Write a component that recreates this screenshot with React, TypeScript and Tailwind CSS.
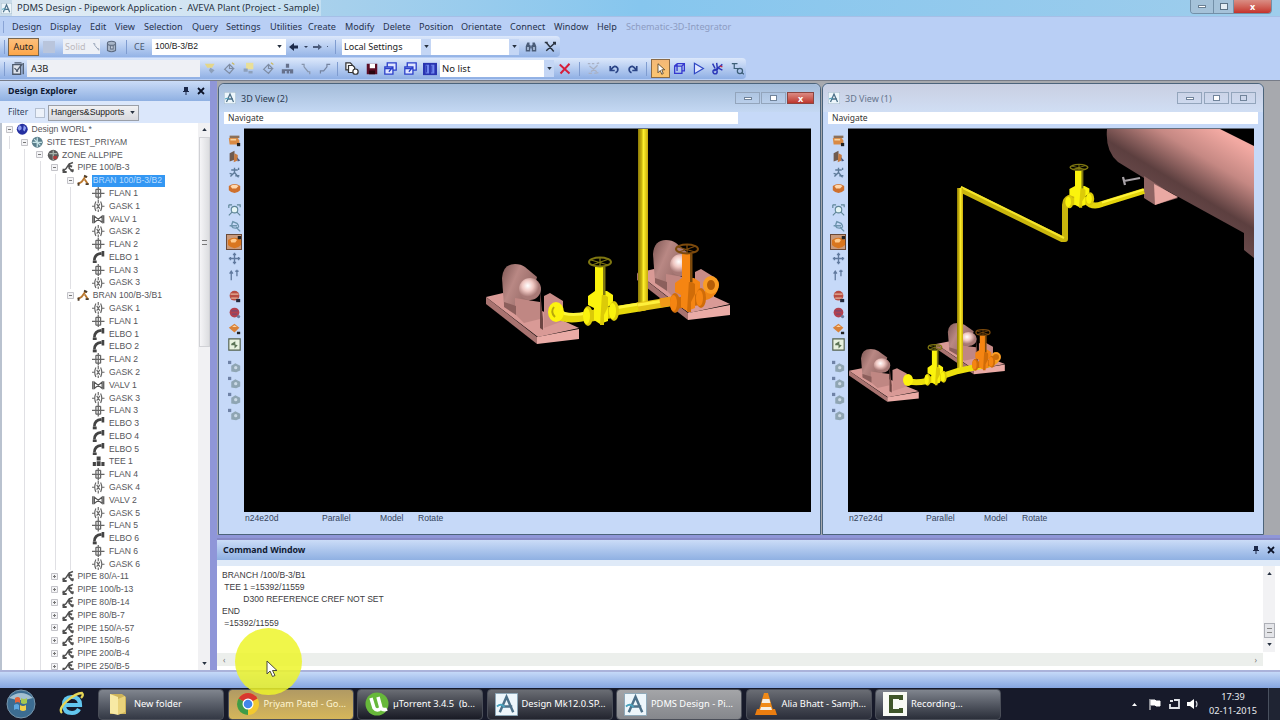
import React from "react";

type IconProps = { name: string; size?: number };

// Small 16x16 glyphs shared by the toolbars, the tree and the view side bars
const glyphs: Record<string, React.ReactNode> = {
  gask: (
    <g stroke="#666" fill="none" strokeWidth="1.5">
      <path d="M0 8h3M13 8h3M5 2Q2 8 5 14M11 2Q14 8 11 14M6 5l4 6M10 5l-4 6M8 0v4M8 12v4" />
    </g>
  ),
  flan: (
    <g stroke="#666" fill="none" strokeWidth="1.6">
      <path d="M0 8h16M8 0v16M5 3v10M11 3v10" />
      <path d="M5 3h6M5 13h6" />
    </g>
  ),
  valv: (
    <g stroke="#555" fill="none" strokeWidth="1.6">
      <path d="M1 3v10M15 3v10M3 4l10 8V4L3 12z" />
    </g>
  ),
  elbo: (
    <g stroke="#444" fill="none" strokeWidth="3.4">
      <path d="M3 12Q3 4 12 3M14 0v7" />
      <path d="M1 14h5" strokeWidth="3.6" />
    </g>
  ),
  tee: (
    <g fill="#444">
      <path d="M6 2h5v5H6zM1 9h4v5H1zM6 8h5v6H6zM12 9h4v5h-4z" />
    </g>
  ),
  pipe: (
    <g stroke="#505050" fill="none" strokeWidth="2">
      <path d="M1 13l4-3 4-6 5-2M10 3l-1 6 5 5" />
      <path d="M2 10v4h4M8 6l5 1M11 12h4" strokeWidth="2.6" />
    </g>
  ),
  bran: (
    <g fill="none" strokeWidth="2.4">
      <path d="M1 13l5-3 5-7M10 7l4 6" stroke="#b9772e" />
      <path d="M9 2l4 2M11 13h4M2 11v4" stroke="#4d3d2c" />
    </g>
  ),
  world: (
    <g>
      <circle cx="8" cy="8" r="7" fill="#2530a0" />
      <path d="M4 3q4 1 3 5l-3 2-2-3zM10 3l3 3-2 5-2-2z" fill="#8f9ff0" />
    </g>
  ),
  site: (
    <g>
      <circle cx="8" cy="8" r="7" fill="#5b7f8c" />
      <path d="M8 2v12M2 8h12M4 4l8 8" stroke="#c6e3e6" strokeWidth="1.6" />
    </g>
  ),
  zone: (
    <g>
      <circle cx="8" cy="8" r="7" fill="#5b5b5b" />
      <path d="M3 6h10M8 2v12" stroke="#a8b4ac" strokeWidth="1.6" />
      <path d="M8 9h5v4H8z" fill="#b03a3a" />
    </g>
  ),
  stack: (
    <g fill="#fff" stroke="#333" strokeWidth="1.4">
      <path d="M1 1h5l2 2v6H1z" />
      <path d="M4 4h5l2 2v6H4z" />
      <circle cx="12" cy="11" r="3" />
    </g>
  ),
  save: (
    <g>
      <path d="M1 1h14v14H1z" fill="#5c0e26" />
      <path d="M5 1h7v6H5z" fill="#fff" />
      <path d="M4 10h8v5H4z" fill="#2a0510" />
    </g>
  ),
  window: (
    <g fill="#dfe5ff" stroke="#2a3fc9" strokeWidth="1.6">
      <path d="M4 1h11v9H4z" />
      <path d="M1 6h10v9H1zM1 8h10M6 12l5-6" />
    </g>
  ),
  book: (
    <g>
      <path d="M0 1h16v14H0z" fill="#2834b0" />
      <path d="M3 3h4v10H3zM9 3h4v10H9z" fill="#6f86ee" />
      <path d="M4 4v8M10 4v8" stroke="#2834b0" />
    </g>
  ),
  redx: <path d="M1 2l13 12M14 1L2 14" stroke="#d61f3b" strokeWidth="2.6" fill="none" />,
  tools: (
    <g stroke="#2b3440" strokeWidth="2" fill="none">
      <path d="M1 2h4M3 2l10 12M14 3L3 13M12 2h3v3" />
    </g>
  ),
  binoc: (
    <g fill="#4a5c78">
      <path d="M3 2h3v3l1 1v8H1V7zM10 2h3l2 5v7H9V6l1-1z" />
      <path d="M7 6h2v4H7z" />
      <path d="M3 8h2v4H3zM11 8h2v4h-2z" fill="#b9cbe8" />
    </g>
  ),
  undo: <path d="M3 4v6h6M4 9Q9 1 13 7q1 4-3 6" stroke="#2a4486" strokeWidth="2.2" fill="none" />,
  redo: <path d="M13 4v6H7M12 9Q7 1 3 7q-1 4 3 6" stroke="#2a4486" strokeWidth="2.2" fill="none" />,
  faded: (
    <g stroke="#a9b1c4" strokeWidth="1.5" fill="none">
      <path d="M1 2h3M6 2h3M12 2l3-1M2 14h4M9 14l5-1M3 5l9 7M13 4l-8 8" />
    </g>
  ),
  pointer: <path d="M4 1v12l3-3 2 5 2-1-2-5h4z" fill="#fff" stroke="#4d3a22" strokeWidth="1.1" />,
  cube: (
    <g fill="none" stroke="#3538cf" strokeWidth="1.6">
      <path d="M2 5h9v9H2zM5 2h9v9h-3M2 5l3-3M11 5l3-3M5 2v9" />
    </g>
  ),
  play: <path d="M3 1.500l11 6.500-11 6.500z" fill="#dfe6ff" stroke="#2f48c4" strokeWidth="1.5" />,
  cut: (
    <g fill="none" stroke="#2a36b8" strokeWidth="1.8">
      <path d="M2 2l3 6M7 1l1 9M14 3L4 11M8 7l6 3" />
      <circle cx="5" cy="12" r="2.600" />
      <path d="M11 5l3 1" stroke="#c03050" />
    </g>
  ),
  link: (
    <g fill="none" stroke="#3d5f78" strokeWidth="1.5">
      <path d="M1 2h7M4 2v6h6" />
      <circle cx="11" cy="11" r="3.200" />
      <path d="M13 13l3 2" />
    </g>
  ),
  edit: (
    <g fill="#dfe4ec" stroke="#4d596c" strokeWidth="1.5">
      <path d="M2 3h9v11H2zM4 7l4 4M4 1h8M14 1v13" />
      <path d="M13 2L6 11" />
    </g>
  ),
  cylinder: (
    <g fill="#a9b6c8" stroke="#5d6b80" strokeWidth="1.3">
      <path d="M3 4v9q5 3 10 0V4" />
      <ellipse cx="8" cy="4" rx="5" ry="2.500" />
      <path d="M7 7h3v4H7z" fill="#dfe7f2" />
    </g>
  ),
  star: (
    <g>
      <path d="M1 2h12l-3 5H4z" fill="#e4d68a" />
      <path d="M8 7l5 3-4 4-3-4z" fill="#8da0bb" />
    </g>
  ),
  diamond: (
    <g fill="none" stroke="#7e8ca3" strokeWidth="1.500">
      <path d="M2 9l6-6 5 5-5 6zM8 3v5h6" />
      <path d="M11 1l3 2" stroke="#ccb95c" />
    </g>
  ),
  yellowDoc: (
    <g>
      <path d="M5 1h9v8H5z" fill="#e9df98" />
      <path d="M2 8h5v4H2zM8 11h5v3H8z" fill="#8da0bb" />
    </g>
  ),
  nodes: (
    <g fill="#66718c">
      <path d="M6 2h4v5H6zM1 9h14v2H1zM1 11h4v3H1zM7 11h3v3H7zM11 11h4v3h-4z" />
    </g>
  ),
  corner: <path d="M2 3h3v3M9 12h3v3M5 6l5 6" fill="none" stroke="#8795ac" strokeWidth="1.500" />,
  slash: <path d="M3 14v-3h4l4-5V3h4" fill="none" stroke="#7584a0" strokeWidth="1.500" />,
  // side bar
  box: (
    <g>
      <path d="M2 2h12v3H2z" fill="#8b705a" />
      <path d="M1 5h11l2 3v5H2z" fill="#d98a45" />
      <path d="M3 6h7v2H3z" fill="#f6d29e" />
      <path d="M11 11h4v4h-4z" fill="#222" />
    </g>
  ),
  boxMan: (
    <g>
      <path d="M2 4l6-3v11l-6 2z" fill="#6f5b50" />
      <path d="M8 4l4 2v7l-5 2z" fill="#c87b40" />
      <path d="M11 9l4 4-3 1z" fill="#4b5a80" />
    </g>
  ),
  walk: (
    <g fill="none" stroke="#5d7a99" strokeWidth="1.700">
      <path d="M8 2v6l-5 5M8 8l5 6M4 5h8M2 9l3 1" />
      <path d="M9 12h5M13 2v3" />
    </g>
  ),
  ball: (
    <g>
      <path d="M1 5q7-5 14 0v5q-7 7-14 0z" fill="#cf702d" />
      <path d="M3 5q5-3 10 0l-3 3H5z" fill="#ffd8ae" />
    </g>
  ),
  bigBall: (
    <g>
      <path d="M0 5q8-6 16 0v6q-8 8-16 0z" fill="#d9761f" />
      <path d="M3 5q5-3 8 0l-2 3H4z" fill="#ffc98a" />
      <path d="M12 0h4v4h-4z" fill="#222" />
    </g>
  ),
  zoomBox: (
    <g fill="none" stroke="#5e8596" strokeWidth="1.400">
      <circle cx="8" cy="7" r="4" fill="#e6f5f5" />
      <path d="M1 1h4M11 1h4v3M1 14l4-4M11 10l4 4M1 1v4" />
    </g>
  ),
  magnify: (
    <g fill="none" stroke="#6c93ad" strokeWidth="1.700">
      <path d="M6 2q-4 8 3 8t2-6zM10 9l5 5M2 7h9" />
    </g>
  ),
  move: <path d="M8 1v14M1 8h14M6 3h4M6 13h4M3 6v4M13 6v4" fill="none" stroke="#60799e" strokeWidth="1.700" />,
  updown: <path d="M4 5v10M2 7l2-3 2 3M11 2v8M9 4h4" fill="none" stroke="#60799e" strokeWidth="1.600" />,
  redball: (
    <g>
      <circle cx="8" cy="7" r="6" fill="#b84d43" />
      <path d="M3 5h10M4 10h8" stroke="#e6b49b" strokeWidth="1.500" />
      <path d="M10 11h5v4h-5z" fill="#252a3d" />
    </g>
  ),
  redring: (
    <g>
      <circle cx="8" cy="8" r="6" fill="#b3414f" />
      <path d="M4 6h8M5 10h6" stroke="#7a4870" strokeWidth="1.500" />
      <circle cx="13" cy="13" r="2" fill="#6b7c9e" />
    </g>
  ),
  orange: (
    <g>
      <path d="M1 7l7-5 6 5-6 6z" fill="#d98239" />
      <path d="M5 6l3-2 3 2z" fill="#ffd49f" />
      <path d="M11 12h4v3h-4z" fill="#222" />
    </g>
  ),
  page: (
    <g>
      <path d="M1 1h14v14H1z" fill="#e8f2e0" stroke="#52604e" strokeWidth="1.400" />
      <path d="M4 7l5-3v4l3 1-4 4V9H4z" fill="#5b7455" />
    </g>
  ),
  gear: (
    <g>
      <path d="M0 1h4v4H0z" fill="#6f82a6" />
      <path d="M4 7l5-3 6 3v6l-5 2-6-1z" fill="#8fa5b3" />
      <circle cx="9.500" cy="9.500" r="2" fill="#ccdae6" />
    </g>
  ),
};

function Icon({ name, size = 12 }: IconProps) {
  return (
    <svg width={size} height={size} viewBox="0 0 16 16" className="shrink-0">
      {glyphs[name]}
    </svg>
  );
}

function Cell({ name, w, size = 13 }: { name: string; w: string; size?: number }) {
  return (
    <div className={`flex shrink-0 items-center justify-center ${w}`}>
      <Icon name={name} size={size} />
    </div>
  );
}

function AvevaLogo({ size }: { size: number }) {
  return (
    <svg width={size} height={size} viewBox="0 0 24 24" className="shrink-0">
      <path d="M.5.500h23v23H.500z" fill="#edf6fb" stroke="#8ba7b8" />
      <path d="M5 20l7-16 7 16M8 14h10" fill="none" stroke="#4c7088" strokeWidth="2.600" />
      <path d="M2 14q5-4 8 1" fill="none" stroke="#49a2bd" strokeWidth="2" />
    </svg>
  );
}

const Sep = ({ w }: { w: string }) => (
  <div className={`flex shrink-0 justify-center ${w}`}>
    <div className="h-[14px] w-px bg-[#7f9cd0]" />
  </div>
);

const Arrow = ({ up }: { up?: boolean }) => (
  <svg width="5" height="3" viewBox="0 0 6 4" className="shrink-0">
    <path d={up ? "M0 4h6L3 0z" : "M0 0h6L3 4z"} fill="#26303f" />
  </svg>
);

const menu: [string, string][] = [
  ["Design", "w-[38px]"],
  ["Display", "w-[40px]"],
  ["Edit", "w-[25px]"],
  ["View", "w-[29px]"],
  ["Selection", "w-[48px]"],
  ["Query", "w-[34px]"],
  ["Settings", "w-[44px]"],
  ["Utilities", "w-[38px]"],
  ["Create", "w-[37px]"],
  ["Modify", "w-[38px]"],
  ["Delete", "w-[36px]"],
  ["Position", "w-[42px]"],
  ["Orientate", "w-[49px]"],
  ["Connect", "w-[44px]"],
  ["Window", "w-[43px]"],
  ["Help", "w-[29px]"],
];

function TitleBar() {
  return (
    <div className="flex h-4 items-center bg-linear-to-r from-[#c9dbe9] via-[#86c6ee] to-[#9ecdec] pl-px">
      <AvevaLogo size={11} />
      <div className="flex h-full w-[309px] items-center bg-linear-to-r from-white/50 to-white/30 pl-[5px] text-[9.4px] whitespace-pre text-[#27323f]">
        PDMS Design - Pipework Application -  AVEVA Plant (Project - Sample)
      </div>
      <div className="mr-2 ml-auto flex h-[14px] self-start overflow-hidden rounded-b border border-t-0 border-[#7390a8] text-white">
        <div className="flex w-[22px] items-center justify-center bg-[#a5c2d9]">
          <div className="h-[3px] w-2 border border-[#6a7f92] bg-white" />
        </div>
        <div className="flex w-[21px] items-center justify-center border-x border-[#7390a8] bg-[#a5c2d9]">
          <div className="h-[7px] w-2 border border-[#5b7083] bg-white/70" />
        </div>
        <div className="flex w-[37px] items-center justify-center bg-linear-to-b from-[#d98d84] to-[#c4302b] text-[9px] font-bold">
          x
        </div>
      </div>
    </div>
  );
}

function MenuBar() {
  return (
    <div className="flex h-5 items-center border-t border-[#a5bfe6] text-[9.100px] text-[#26324e]">
      <div className="ml-[3px] h-3 w-px bg-[#8aa4d6]" />
      <div className="ml-2 flex">
        {menu.map(([label, w]) => (
          <div key={label} className={w}>
            {label}
          </div>
        ))}
        <div className="text-[#8d9cc2]">Schematic-3D-Integrator</div>
      </div>
    </div>
  );
}

function MainToolbar() {
  return (
    <div className="flex h-[21px] w-[560px] items-center rounded-r bg-linear-to-b from-[#dce8fb] to-[#94b3e6] text-[9px] text-[#222]">
      <Sep w="w-2" />
      <div className="flex h-[18px] w-[31px] items-center justify-center border border-[#77664f] bg-linear-to-b from-[#fcc07c] to-[#fda648]">
        Auto
      </div>
      <div className="mx-1 h-3 w-3 bg-[#b9c5dc]" />
      <div className="ml-1 flex h-[15px] w-[37px] items-center bg-[#edf0f6] pl-[2px] text-[#bcb9bd]">
        Solid
      </div>
      <div className="-ml-2">
        <Icon name="corner" size={9} />
      </div>
      <Cell name="cylinder" w="w-[20px]" />
      <Sep w="w-[10px]" />
      <div className="w-[21px] pl-[3px] text-[#4b5870]">CE</div>
      <div className="flex h-[16px] w-[134px] items-center justify-between bg-white pr-1 pl-[3px] font-['Liberation_Sans',sans-serif] text-[8.600px]">
        100/B-3/B2 <Arrow />
      </div>
      <svg width="42" height="12" viewBox="0 0 42 12" className="shrink-0">
        <path d="M3 6l5-4v2.500h4v3H8V10z" fill="#1c2a4a" />
        <path d="M18 5h4l-2 2z" fill="#33415c" />
        <path d="M36 6l-4-3v2h-5v2h5v2z" fill="#4c5c7b" />
        <path d="M41 5h1v1h-1z" fill="#4c5c7b" />
      </svg>
      <Sep w="w-[14px]" />
      <div className="flex h-[16px] w-[89px] shrink-0 items-center justify-between bg-white pl-[2px]">
        Local Settings
        <div className="flex h-full w-[10px] items-center justify-center bg-[#c4d6f5]">
          <Arrow />
        </div>
      </div>
      <div className="flex h-[16px] w-[88px] shrink-0 justify-end bg-white">
        <div className="flex h-full w-[10px] items-center justify-center bg-[#c4d6f5]">
          <Arrow />
        </div>
      </div>
      <Cell name="binoc" w="w-[24px]" size={12} />
      <Cell name="tools" w="w-[13px]" size={12} />
    </div>
  );
}

function ElementToolbar() {
  return (
    <div className="mt-px flex h-[21px] w-[746px] items-center rounded-r bg-linear-to-b from-[#dce8fb] to-[#8fafe4] text-[9px] text-[#222]">
      <Sep w="w-2" />
      <Cell name="edit" w="w-[19px]" size={14} />
      <div className="flex h-[17px] w-[173px] shrink-0 items-center bg-[#eef0f5] pl-1 text-[9.400px]">A3B</div>
      <Cell name="star" w="w-[20px]" />
      <Cell name="diamond" w="w-[19px]" />
      <Cell name="yellowDoc" w="w-[19px]" />
      <Cell name="diamond" w="w-[20px]" />
      <Cell name="nodes" w="w-[19px]" />
      <Cell name="corner" w="w-[18px]" />
      <Cell name="slash" w="w-[18px]" />
      <Sep w="w-[9px]" />
      <Cell name="stack" w="w-[20px]" size={14} />
      <Cell name="save" w="w-[19px]" size={12} />
      <Cell name="window" w="w-[19px]" size={13} />
      <Cell name="window" w="w-[20px]" size={13} />
      <Cell name="book" w="w-[20px]" size={14} />
      <div className="flex h-[17px] w-[114px] shrink-0 items-center justify-between bg-white pl-[2px] text-[9.500px]">
        No list
        <div className="flex h-full w-[10px] items-center justify-center bg-[#c4d6f5]">
          <Arrow />
        </div>
      </div>
      <Cell name="redx" w="w-[22px]" size={12} />
      <Sep w="w-[6px]" />
      <Cell name="faded" w="w-[22px]" />
      <Cell name="undo" w="w-[19px]" size={12} />
      <Cell name="redo" w="w-[19px]" size={12} />
      <Sep w="w-[9px]" />
      <div className="flex h-[19px] w-[19px] shrink-0 items-center justify-center border border-[#8a6a45] bg-linear-to-b from-[#f3b877] to-[#fbc56f]">
        <Icon name="pointer" />
      </div>
      <Cell name="cube" w="w-[19px]" />
      <Cell name="play" w="w-[19px]" />
      <Cell name="cut" w="w-[19px]" />
      <Cell name="link" w="w-[20px]" />
    </div>
  );
}

function PanelTitle({ title }: { title: string }) {
  return (
    <div className="flex h-5 shrink-0 items-center pr-1 text-[8.800px] font-bold text-[#101a33]">
      <span className="flex-1">{title}</span>
      <svg width="24" height="10" viewBox="0 0 24 10">
        <path d="M2 1h4v4H2zM1 5h6v1H1zM3.500 6h1v3h-1z" fill="#1b2748" />
        <path d="M16 2l6 6M22 2l-6 6" stroke="#0b1227" strokeWidth="1.800" />
      </svg>
    </div>
  );
}

type Row = [depth: number, icon: string, label: string];

const rows: Row[] = [
  [0, "world", "Design WORL *"],
  [1, "site", "SITE TEST_PRIYAM"],
  [2, "zone", "ZONE ALLPIPE"],
  [3, "pipe", "PIPE 100/B-3"],
  [4, "bran", "BRAN 100/B-3/B2"],
  [5, "flan", "FLAN 1"],
  [5, "gask", "GASK 1"],
  [5, "valv", "VALV 1"],
  [5, "gask", "GASK 2"],
  [5, "flan", "FLAN 2"],
  [5, "elbo", "ELBO 1"],
  [5, "flan", "FLAN 3"],
  [5, "gask", "GASK 3"],
  [4, "bran", "BRAN 100/B-3/B1"],
  [5, "gask", "GASK 1"],
  [5, "flan", "FLAN 1"],
  [5, "elbo", "ELBO 1"],
  [5, "elbo", "ELBO 2"],
  [5, "flan", "FLAN 2"],
  [5, "gask", "GASK 2"],
  [5, "valv", "VALV 1"],
  [5, "gask", "GASK 3"],
  [5, "flan", "FLAN 3"],
  [5, "elbo", "ELBO 3"],
  [5, "elbo", "ELBO 4"],
  [5, "elbo", "ELBO 5"],
  [5, "tee", "TEE 1"],
  [5, "flan", "FLAN 4"],
  [5, "gask", "GASK 4"],
  [5, "valv", "VALV 2"],
  [5, "gask", "GASK 5"],
  [5, "flan", "FLAN 5"],
  [5, "elbo", "ELBO 6"],
  [5, "flan", "FLAN 6"],
  [5, "gask", "GASK 6"],
  [3, "pipe", "PIPE 80/A-11"],
  [3, "pipe", "PIPE 100/b-13"],
  [3, "pipe", "PIPE 80/B-14"],
  [3, "pipe", "PIPE 80/B-7"],
  [3, "pipe", "PIPE 150/A-57"],
  [3, "pipe", "PIPE 150/B-6"],
  [3, "pipe", "PIPE 200/B-4"],
  [3, "pipe", "PIPE 250/B-5"],
];

function TreeRow({ row, index }: { row: Row; index: number }) {
  const [depth, icon, label] = row;
  const selected = index === 4;
  const collapsed = index > 34;
  return (
    <div className="flex h-[12.79px] items-center">
      {Array.from({ length: depth }, (_, i) => (
        <div key={i} className="flex h-full w-[15.3px] shrink-0 justify-center">
          {(i > 0 || depth === 1) && <div className="h-full w-px bg-[#e0e0e4]" />}
        </div>
      ))}
      {depth < 5 ? (
        <div className="flex w-[14px] shrink-0 justify-center">
          <svg width="7" height="7" viewBox="0 0 7 7">
            <path d="M.5.500h6v6h-6z" fill="#f4f4f6" stroke="#c3c3c8" />
            <path d={collapsed ? "M2 3.500h3M3.500 2v3" : "M2 3.500h3"} stroke="#777" />
          </svg>
        </div>
      ) : (
        <div className="w-[14px] shrink-0" />
      )}
      <Icon name={icon} size={12.500} />
      <div
        className={
          selected
            ? "ml-[2px] flex h-3 w-[73px] items-center bg-[#3397f3] pl-px text-[#b9dcff]"
            : depth === 5
              ? "ml-[4px] text-[#55555a]"
              : "ml-[3px] text-[#55555a]"
        }
      >
        {label}
      </div>
    </div>
  );
}

function Explorer() {
  return (
    <div className="flex w-[210px] shrink-0 flex-col bg-[#dbe7fb]">
      <div className="bg-linear-to-b from-[#cbdcf7] to-[#8fb0e2] pl-2">
        <PanelTitle title="Design Explorer" />
      </div>
      <div className="flex h-[22px] items-center pt-px pl-2 text-[9px] text-[#30405e]">
        <div className="w-[27px] text-[8.500px]">Filter</div>
        <div className="h-[10px] w-[10px] border border-[#b5c0d1] bg-[#edf2fa]" />
        <div className="ml-[3px] flex h-4 w-[91px] items-center justify-between border border-[#9a9fa8] bg-linear-to-b from-[#f1f1f3] to-[#d8d9de] pr-[3px] pl-[2px] font-['Liberation_Sans',sans-serif] text-[8.700px] text-[#222]">
          Hangers&amp;Supports <Arrow />
        </div>
      </div>
      <div className="flex min-h-0 flex-1 border-l-2 border-[#b9c2cf] bg-white">
        <div className="flex-1 overflow-hidden font-['Liberation_Sans',sans-serif] text-[8.600px] leading-none whitespace-nowrap">
          {rows.map((row, i) => (
            <TreeRow key={i} row={row} index={i} />
          ))}
        </div>
        <div className="flex w-[12px] flex-col items-center bg-[#f1f1f3] py-[5px]">
          <Arrow up />
          <div className="mt-[6px] flex h-[210px] w-[11px] items-center justify-center border border-[#d0d1d5] bg-linear-to-r from-[#f5f5f7] to-[#dcdde0]">
            <div className="h-[5px] w-[5px] border-y border-[#777]" />
          </div>
          <div className="mt-auto">
            <Arrow />
          </div>
        </div>
      </div>
    </div>
  );
}

const sideGroups = [
  ["box", "boxMan", "walk", "ball"],
  ["zoomBox", "magnify", "bigBall", "move", "updown"],
  ["redball", "redring", "orange", "page"],
  ["gear", "gear", "gear", "gear"],
];

function SideBar() {
  return (
    <div className="flex w-[20px] shrink-0 flex-col items-center gap-[6px] pt-[4px]">
      {sideGroups.map((group, g) => (
        <div key={g} className="flex flex-col">
          {group.map((name, i) => (
            <div
              key={i}
              className={`flex h-4 w-4 items-center justify-center ${name === "bigBall" ? "border border-[#6b4a38] bg-[#c99a7c]" : ""}`}
            >
              <Icon name={name} size={13} />
            </div>
          ))}
        </div>
      ))}
    </div>
  );
}

// Motor and pump on a sloping base plate, origin at the left corner of the plate
function Pump({ transform }: { transform: string }) {
  return (
    <g transform={transform}>
      <path d="M0 33L17 29 93 64 52 73z" fill="#d99a96" />
      <path d="M0 33v7l51 40V73z" fill="#a87370" />
      <path d="M51 73l42-8v10l-42 5z" fill="#eaaba6" />
      <path d="M16 14Q17 0 29 0q6 0 10 3l12 10-6 22-15 14-12-7z" fill="url(#motor)" />
      <path d="M29 34l12 2 13 2v17l-16 4-9-9z" fill="#c08783" />
      <path d="M18 38l12 4v9l-12-8z" fill="#8c5f5c" />
      <path d="M54 26l3 29v11l-3-2z" fill="#6e4542" />
      <path d="M58 32l6-3 13 8v20l-19 7z" fill="#c98c88" />
      <circle cx="44" cy="25" r="11" fill="url(#cap)" />
    </g>
  );
}

type ValveProps = { transform: string; light: string; mid: string; dark: string };

// Gate valve with hand wheel, origin at the centre of the pipe
function Valve({ transform, light, mid, dark }: ValveProps) {
  return (
    <g transform={transform}>
      <path d="M-15 4L15-1" stroke={mid} strokeWidth="11" />
      <path d="M-5-22l-7 5v9l6 3v12l6 4 8-3V-6l5-4v-8l-6-4z" fill={light} />
      <path d="M2-20l6 4v10L4 2v10H0z" fill={mid} />
      <path d="M-5-46H5v28H-5z" fill={light} />
      <path d="M3-46h2.500v28H3z" fill={dark} />
      <ellipse cy="-51" rx="11" ry="4.500" fill="none" stroke={dark} strokeWidth="2" />
      <path d="M-9-53L8-48M-8-48L9-54M0-55v8" stroke={dark} strokeWidth="1.300" />
      <ellipse cx="-12" cy="3" rx="5" ry="10" fill={mid} />
      <ellipse cx="-13.500" cy="3" rx="3.500" ry="8" fill={light} />
      <ellipse cx="14" cy="-2" rx="5" ry="10" fill={mid} />
      <ellipse cx="12.500" cy="-2" rx="3.500" ry="8" fill={light} />
    </g>
  );
}

const yellow = { light: "#fbf30d", mid: "#dccb08", dark: "#7f7711" };
const orange = { light: "#f58512", mid: "#d06c08", dark: "#7d4a0c" };

const Shades = () => (
  <defs>
    <linearGradient id="motor" x1="0" x2="1" y1="0" y2=".6">
      <stop offset="0" stopColor="#7d5653" />
      <stop offset=".4" stopColor="#b98884" />
      <stop offset="1" stopColor="#8d625f" />
    </linearGradient>
    <radialGradient id="cap" cx=".4" cy=".35">
      <stop offset="0" stopColor="#fff" />
      <stop offset=".5" stopColor="#f0c8c3" />
      <stop offset="1" stopColor="#a87976" />
    </radialGradient>
    <linearGradient id="riser">
      <stop offset="0" stopColor="#8c7a08" />
      <stop offset=".35" stopColor="#c9b30c" />
      <stop offset=".55" stopColor="#fdf02c" />
      <stop offset="1" stopColor="#c7a90b" />
    </linearGradient>
    <linearGradient id="tank" gradientUnits="userSpaceOnUse" x1="1232" y1="138" x2="1186" y2="214">
      <stop offset="0" stopColor="#f2a9a2" />
      <stop offset=".35" stopColor="#c58883" />
      <stop offset=".75" stopColor="#5c3f3f" />
      <stop offset="1" stopColor="#68494a" />
    </linearGradient>
  </defs>
);

function CloseScene() {
  return (
    <svg viewBox="244 129 567 383" className="block h-full w-full">
      <Shades />
      <Pump transform="translate(486 264)" />
      <Pump transform="translate(637 240)" />
      <path d="M556 313Q566 322 590 315L645 306" fill="none" stroke="#e6d80b" strokeWidth="9" />
      <path d="M558 310Q568 318 590 312L645 303" fill="none" stroke="#fdf63a" strokeWidth="3" />
      <ellipse cx="556" cy="312" rx="8" ry="10" fill="#fdf30e" />
      <path d="M554 307q-4 5 1 10" fill="none" stroke="#b7a80b" strokeWidth="2" />
      <path d="M638 129h10v175h-10z" fill="url(#riser)" />
      <path d="M638 307L675 301" stroke="#e3c315" strokeWidth="9" />
      <path d="M638 305L675 299" stroke="#fff03c" strokeWidth="3" />
      <path d="M660 303L678 300" stroke="#ef9918" strokeWidth="9" />
      <path d="M695 297q20 0 19-14" fill="none" stroke="#ef8512" strokeWidth="9" />
      <ellipse cx="711" cy="285" rx="6" ry="7" fill="#b65e07" stroke="#fb9d22" strokeWidth="4" />
      <Valve transform="translate(600 313)" {...yellow} />
      <Valve transform="translate(687 300)" {...orange} />
    </svg>
  );
}

function WideScene() {
  return (
    <svg viewBox="848 129 406 383" className="block h-full w-full">
      <path d="M1107 129Q1105 151 1118 162L1144 178 1244 233v17l10 8V146L1220 129z" fill="url(#tank)" />
      <path d="M1144 176l34 22-23 7-11-7z" fill="#8e6462" />
      <path d="M1154 184l24 13-23 8z" fill="#eaa9a3" />
      <path d="M1124 181l16-3M1123 177l2 8" stroke="#a9a3a8" strokeWidth="2.200" />
      <Pump transform="translate(849 349) scale(.75 .66)" />
      <Pump transform="translate(936 323) scale(.74 .64)" />
      <path d="M1144 191L1102 204Q1092 208 1086 201" fill="none" stroke="#e4d40c" strokeWidth="6" />
      <path d="M1144 189.500L1102 202.500" stroke="#fff33a" strokeWidth="2" />
      <path d="M1079 199q-13-5-14 6V239L1062 239 960 189" fill="none" stroke="#c9b50c" strokeWidth="6" strokeLinejoin="round" />
      <path d="M1064 238L961 187" stroke="#f5e52a" strokeWidth="2" />
      <path d="M957 188h6v182h-6z" fill="url(#riser)" />
      <path d="M905 380q8 4 22 1L958 371 990 364" fill="none" stroke="#ece00d" strokeWidth="6" />
      <ellipse cx="908" cy="380" rx="5" ry="6" fill="#fdf30e" />
      <path d="M983 364q14 0 14-8" fill="none" stroke="#f0a01c" strokeWidth="6" />
      <circle cx="996" cy="357" r="4" fill="#c96d0a" stroke="#fb9d22" strokeWidth="2" />
      <Valve transform="translate(935 378) scale(.62 .6)" {...yellow} />
      <Valve transform="translate(983 363) scale(.64 .6)" {...orange} />
      <Valve transform="translate(1079 200) scale(.8 .64)" {...yellow} />
    </svg>
  );
}

type ViewProps = {
  title: string;
  active?: boolean;
  width: string;
  angle: string;
  field: string;
  children: React.ReactNode;
};

function ViewWindow({ title, active, width, angle, field, children }: ViewProps) {
  const button = "flex h-3 items-center justify-center border border-[#93a5bc]";
  return (
    <div
      className={`flex shrink-0 flex-col rounded-t-md border border-[#4c647b] bg-[#c6d9f8] px-[5px] ${width}`}
    >
      <div
        className={`-mx-[5px] flex h-[28px] shrink-0 items-center rounded-t-md pr-[6px] pl-[5px] ${active ? "bg-linear-to-b from-[#a4bcd9] to-[#c4d8f3]" : "bg-linear-to-b from-[#c9cfe2] to-[#d0def4]"}`}
      >
        <AvevaLogo size={12} />
        <div className={`ml-[5px] flex-1 text-[9px] ${active ? "text-[#2b3a50]" : "text-[#67768e]"}`}>{title}</div>
        <div className={`flex ${active ? "gap-px" : "mr-[1px] gap-[2px]"}`}>
          <div className={`${button} w-[25px]`}>
            <div className="h-[3px] w-2 border border-[#71849b] bg-white" />
          </div>
          <div className={`${button} w-[25px]`}>
            <div className="h-[6px] w-[7px] border border-[#71849b] bg-white" />
          </div>
          {active ? (
            <div className="flex h-3 w-[27px] items-center justify-center border border-[#8b4540] bg-linear-to-b from-[#db8a83] to-[#bd342d] text-[9px] leading-none font-bold text-white">
              x
            </div>
          ) : (
            <div className={`${button} w-[25px]`}>
              <div className="h-[6px] w-[7px] border border-[#71849b]" />
            </div>
          )}
        </div>
      </div>
      <div className={`flex h-3 shrink-0 items-center bg-white pl-[4px] text-[8.500px] text-[#333] ${field}`}>Navigate</div>
      <div className="mt-1 flex h-[384px] shrink-0">
        <SideBar />
        <div className={`flex-1 border-t border-[#67707e] bg-black ${active ? "mr-[4px]" : "mr-[4px]"}`}>{children}</div>
      </div>
      <div className="flex pl-[21px] font-['Liberation_Sans',sans-serif] text-[8.600px] leading-[13px] text-[#34435a]">
        <div className="w-[77px]">{angle}</div>
        <div className="w-[58px]">Parallel</div>
        <div className="w-[38px]">Model</div>
        <div>Rotate</div>
      </div>
    </div>
  );
}

function CommandWindow() {
  return (
    <div className="mt-[3px] flex min-h-0 flex-1 flex-col border-t-2 border-[#8689c6] bg-[#dfeaf8]">
      <div className="bg-linear-to-b from-[#cbdcf7] to-[#8fb0e2] pl-[6px]">
        <PanelTitle title="Command Window" />
      </div>
      <div className="mt-[6px] flex flex-1 bg-white">
        <div className="flex flex-1 flex-col">
          <pre className="flex-1 pt-[3px] pl-[5px] font-['Liberation_Sans',sans-serif] text-[8.550px] leading-[12px] text-[#3b3b40]">
            {"BRANCH /100/B-3/B1\n TEE 1 =15392/11559\n         D300 REFERENCE CREF NOT SET\nEND\n =15392/11559"}
          </pre>
          <div className="mb-[4px] flex h-[13px] items-center justify-between bg-[#ecefec] px-[6px] text-[8px] text-[#777]">
            <span>‹</span>
            <span>›</span>
          </div>
        </div>
        <div className="mr-[5px] mb-[18px] flex w-[12px] flex-col items-center bg-[#f2f2f4] py-[6px]">
          <Arrow up />
          <div className="mt-auto mb-[5px] flex h-[15px] w-[11px] items-center justify-center border border-[#adafb6] bg-[#e4e5e9]">
            <div className="h-[5px] w-[5px] border-y border-[#888]" />
          </div>
          <Arrow />
        </div>
      </div>
    </div>
  );
}

function TaskIcon({ name }: { name: string }) {
  if (name === "aveva") return <AvevaLogo size={23} />;
  return (
    <svg width="24" height="24" viewBox="0 0 24 24" className="shrink-0">
      {name === "folder" && (
        <g>
          <path d="M4 2h12l4 3v17H4z" fill="#cdb35a" />
          <path d="M4 2l8 3v18l-8-2z" fill="#f7e9a4" />
          <path d="M12 7l7-3v16l-7 3z" fill="#e9d27b" />
        </g>
      )}
      {name === "chrome" && (
        <g>
          <circle cx="12" cy="12" r="11" fill="#f3c92f" />
          <path d="M12 12L2.500 6.500A11 11 0 0 1 21.500 6.500z" fill="#d8382f" />
          <path d="M12 12L2.500 6.500A11 11 0 0 0 12 23z" fill="#3f9b48" />
          <circle cx="12" cy="12" r="5.500" fill="#fff" />
          <circle cx="12" cy="12" r="4.300" fill="#4286e8" />
        </g>
      )}
      {name === "utorrent" && (
        <g>
          <circle cx="12" cy="12" r="11.500" fill="#67b83a" />
          <path d="M6 6l3 10q3 4 7 0l-3-11M15 15q3 4 7 2" fill="none" stroke="#fff" strokeWidth="3.500" />
        </g>
      )}
      {name === "vlc" && (
        <g>
          <path d="M10 1h4l5 17H5z" fill="#f08a18" />
          <path d="M8.600 7h6.800l1 4H7.600z" fill="#f5eee4" />
          <path d="M3 17h18l2 6H1z" fill="#ea7d10" />
          <path d="M7 15h10l1 3H6z" fill="#f5eee4" />
        </g>
      )}
      {name === "camtasia" && (
        <g>
          <path d="M0 0h24v24H0z" fill="#f8faf4" />
          <path d="M18 8V5H8v14h10v-3" fill="none" stroke="#3f5629" strokeWidth="4" />
        </g>
      )}
    </svg>
  );
}

const tasks = [
  { icon: "folder", label: "New folder", look: "from-[#80858e] to-[#343945] text-white" },
  { icon: "chrome", label: "Priyam Patel - Go...", look: "from-[#b19a63] to-[#d5b65a] text-[#fff6d2]" },
  { icon: "utorrent", label: "µTorrent 3.4.5  (b...", look: "from-[#6a6d74] to-[#191b25] text-white" },
  { icon: "aveva", label: "Design Mk12.0.SP...", look: "from-[#6a6d74] to-[#23252f] text-white" },
  { icon: "aveva", label: "PDMS Design - Pi...", look: "from-[#a4a5a8] to-[#85878c] text-white" },
  { icon: "vlc", label: "Alia Bhatt - Samjh...", look: "from-[#6a6d74] to-[#2b2e3a] text-white" },
  { icon: "camtasia", label: "Recording...", look: "from-[#80858e] to-[#2b2f3a] text-white" },
];

function Taskbar() {
  return (
    <div className="flex h-8 shrink-0 items-center bg-[#171a2a]">
      <svg width="98" height="32" viewBox="0 0 98 32" className="shrink-0">
        <circle cx="21" cy="16" r="14" fill="#3c6c91" stroke="#7896ac" />
        <path d="M9 10q12-10 24 0-12 4-24 0z" fill="#a2bfd1" />
        <path d="M15 10q3-2 5 0v5q-2-2-5 0z" fill="#e2633a" />
        <path d="M21 10q3 2 6 0v5q-3 2-6 0z" fill="#a6c850" />
        <path d="M14 17q3-2 5 0v5q-2-2-5 0z" fill="#5ea8e2" />
        <path d="M20 17q3 2 6 0v5q-3 2-6 0z" fill="#f2cf49" />
        <path d="M64 17h16q0-8-8-8t-8 8 8 8q5 0 7-4" fill="none" stroke="#62c6ee" strokeWidth="4.200" />
        <path d="M62 25q-4-4 5-12T82 5q2 2-1 5" fill="none" stroke="#e6d656" strokeWidth="2.300" />
      </svg>
      {tasks.map(({ icon, label, look }) => (
        <div
          key={label}
          className={`mr-[3.500px] flex h-[31px] w-[126px] shrink-0 items-center overflow-hidden rounded-sm border border-[#4a4e58] bg-linear-to-b pl-[7px] text-[9.300px] whitespace-pre ${look}`}
        >
          <TaskIcon name={icon} />
          <span className="ml-[4px]">{label}</span>
        </div>
      ))}
      <svg width="72" height="16" viewBox="0 0 72 16" className="ml-auto shrink-0">
        <path d="M2 10h5L4.500 7z" fill="#fff" />
        <path d="M20 3v11M21 4h4l1 1h4v5h-4l-1-1h-4z" fill="#fff" stroke="#fff" />
        <path d="M40 5h3M40 8v4h9V4h-5" fill="none" stroke="#e2e5ea" strokeWidth="1.800" />
        <path d="M57 6h3l4-3v10l-4-3h-3z" fill="#fff" />
        <path d="M66 5q2 3 0 6" fill="none" stroke="#cfd3da" strokeWidth="1.200" />
      </svg>
      <div className="w-[62px] text-center text-[9.200px] leading-[14px] text-[#e9ebef]">
        <div>17:39</div>
        <div>02-11-2015</div>
      </div>
      <div className="ml-1 h-full w-[12px] border-l border-[#49505e] bg-[#1f2433]" />
    </div>
  );
}

export default function App() {
  return (
    <div className="relative flex h-[720px] w-[1280px] flex-col overflow-hidden bg-[#b9cff5] font-['Noto_Sans',sans-serif] leading-none">
      <TitleBar />
      <MenuBar />
      <MainToolbar />
      <ElementToolbar />
      <div className="mt-px flex h-[590px] shrink-0 border-t border-[#777c88]">
        <Explorer />
        <div className="w-[7px] shrink-0 bg-[#8f96d8]" />
        <div className="flex min-w-0 flex-1 flex-col bg-[#8f96d8]">
          <div className="flex h-[454px] shrink-0 bg-[#a7a9ae] pt-[2px] pl-px">
            <ViewWindow title="3D View (2)" active width="w-[603px]" angle="n24e20d" field="mr-[77px]">
              <CloseScene />
            </ViewWindow>
            <ViewWindow title="3D View (1)" width="ml-px w-[442px]" angle="n27e24d" field="mr-0">
              <WideScene />
            </ViewWindow>
          </div>
          <CommandWindow />
        </div>
      </div>
      <div className="flex-1 border-t-2 border-[#aab2da] bg-linear-to-b from-[#c5d9f8] to-[#86a6e0]" />
      <Taskbar />
      {/* click highlight and mouse pointer */}
      <div className="absolute top-[628px] left-[235px] h-[67px] w-[67px] rounded-full bg-[#edf52a]/85" />
      <svg width="12" height="18" viewBox="0 0 12 18" className="absolute top-[660px] left-[266px]">
        <path d="M1 1v13l3-3 2.500 5.500 2.500-1-2.500-5H11z" fill="#fff" stroke="#4b4b3a" />
      </svg>
    </div>
  );
}
